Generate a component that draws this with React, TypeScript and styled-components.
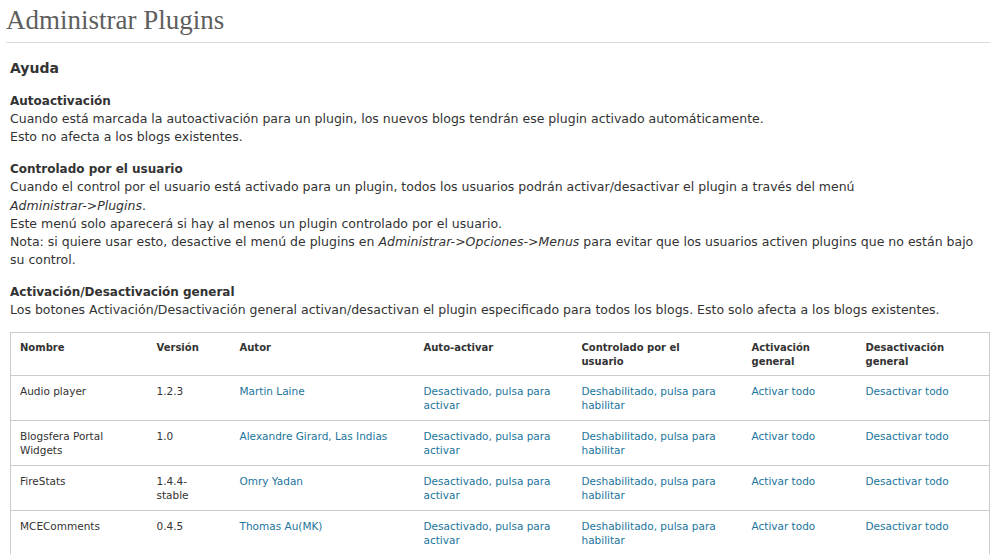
import React from "react";
import styled, { createGlobalStyle } from "styled-components";

const GlobalStyle = createGlobalStyle`
  html, body { margin: 0; padding: 0; background: #fff; }
  body {
    font-family: "DejaVu Sans", "Noto Sans", sans-serif;
    color: #333;
  }
`;

const Page = styled.div`
  padding: 0 10px 0 6px;
`;

const Title = styled.h2`
  margin: 0;
  padding: 4px 0 0;
  height: 43px;
  box-sizing: border-box;
  font-family: "Liberation Serif", "DejaVu Serif", serif;
  font-weight: normal;
  font-size: 27px;
  line-height: 32px;
  color: #5e5e5e;
  border-bottom: 1px solid #dadada;
`;

const Content = styled.div`
  padding: 0 0 0 4px;
`;

const HelpTitle = styled.h3`
  margin: 15px 0 0;
  font-size: 14px;
  line-height: 20px;
  font-weight: bold;
  color: #333;
`;

const Section = styled.div`
  margin-top: 14px;
  font-size: 12.5px;
  line-height: 18.2px;
`;

const SectionTitle = styled.h4`
  margin: 0;
  font-size: 12px;
  line-height: 18px;
  font-weight: bold;
`;

const Para = styled.div``;

const Path = styled.em`
  white-space: nowrap;
`;

const Table = styled.table`
  margin-top: 12px;
  width: 979px;
  border: 1px solid #ccc;
  border-collapse: collapse;
  table-layout: fixed;
  font-size: 10.5px;
  line-height: 14px;
`;

const Th = styled.th`
  text-align: left;
  vertical-align: top;
  font-weight: bold;
  font-size: 10px;
  padding: 8px 9px 6px;
  border-bottom: 1px solid #ccc;
`;

const Td = styled.td`
  vertical-align: top;
  padding: 8px 9px;
  height: 28px;
  border-bottom: 1px solid #ccc;
`;

const Link = styled.a`
  color: #21759b;
  text-decoration: none;
`;

type Plugin = { name: string; version: string; author: string };

const plugins: Plugin[] = [
  { name: "Audio player", version: "1.2.3", author: "Martin Laine" },
  { name: "Blogsfera Portal Widgets", version: "1.0", author: "Alexandre Girard, Las Indias" },
  { name: "FireStats", version: "1.4.4-\nstable", author: "Omry Yadan" },
  { name: "MCEComments", version: "0.4.5", author: "Thomas Au(MK)" },
];

const widths = [137, 83, 184, 158, 170, 114, 133];

const Multi = ({ text }: { text: string }) => (
  <>
    {text.split("\n").map((t, i) => (
      <React.Fragment key={i}>
        {i > 0 && <br />}
        {t}
      </React.Fragment>
    ))}
  </>
);

const headers = [
  "Nombre",
  "Versión",
  "Autor",
  "Auto-activar",
  "Controlado por el\nusuario",
  "Activación\ngeneral",
  "Desactivación\ngeneral",
];

export default function App() {
  return (
    <Page>
      <GlobalStyle />
      <Title>Administrar Plugins</Title>
      <Content>
        <HelpTitle>Ayuda</HelpTitle>
        <Section>
          <SectionTitle>Autoactivación</SectionTitle>
          <Para>
            Cuando está marcada la autoactivación para un plugin, los nuevos blogs tendrán ese plugin activado automáticamente.
          </Para>
          <Para>Esto no afecta a los blogs existentes.</Para>
        </Section>
        <Section>
          <SectionTitle>Controlado por el usuario</SectionTitle>
          <Para>
            Cuando el control por el usuario está activado para un plugin, todos los usuarios podrán activar/desactivar el plugin a través del menú <Path>Administrar-&gt;Plugins</Path>.
          </Para>
          <Para>Este menú solo aparecerá si hay al menos un plugin controlado por el usuario.</Para>
          <Para>
            Nota: si quiere usar esto, desactive el menú de plugins en <Path>Administrar-&gt;Opciones-&gt;Menus</Path> para evitar que los usuarios activen plugins que no están bajo su control.
          </Para>
        </Section>
        <Section>
          <SectionTitle>Activación/Desactivación general</SectionTitle>
          <Para>
            Los botones Activación/Desactivación general activan/desactivan el plugin especificado para todos los blogs. Esto solo afecta a los blogs existentes.
          </Para>
        </Section>
        <Table>
          <colgroup>
            {widths.map((w, i) => (
              <col key={i} style={{ width: w }} />
            ))}
          </colgroup>
          <thead>
            <tr>
              {headers.map((h) => (
                <Th key={h}>
                  <Multi text={h} />
                </Th>
              ))}
            </tr>
          </thead>
          <tbody>
            {plugins.map((p) => (
              <tr key={p.name}>
                <Td>{p.name}</Td>
                <Td>
                  <Multi text={p.version} />
                </Td>
                <Td>
                  <Link href="#">{p.author}</Link>
                </Td>
                <Td>
                  <Link href="#">Desactivado, pulsa para activar</Link>
                </Td>
                <Td>
                  <Link href="#">Deshabilitado, pulsa para habilitar</Link>
                </Td>
                <Td>
                  <Link href="#">Activar todo</Link>
                </Td>
                <Td>
                  <Link href="#">Desactivar todo</Link>
                </Td>
              </tr>
            ))}
          </tbody>
        </Table>
      </Content>
    </Page>
  );
}
